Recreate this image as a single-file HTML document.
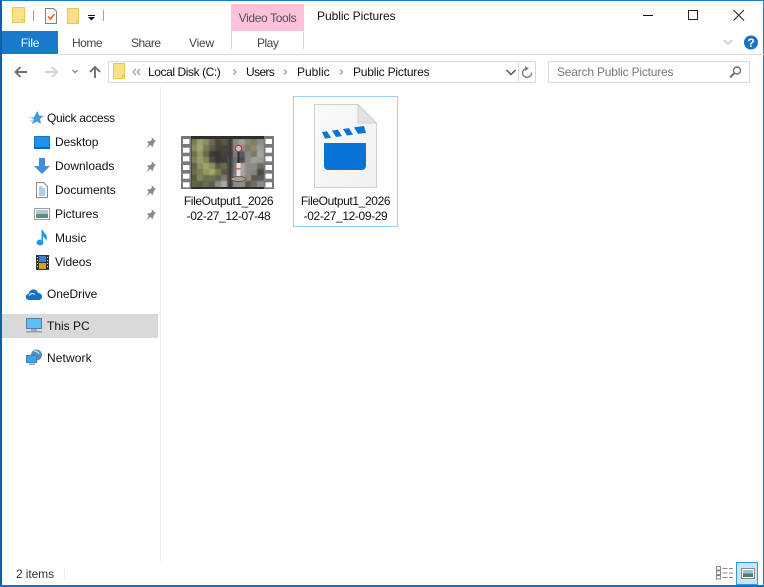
<!DOCTYPE html>
<html><head><meta charset="utf-8"><style>
html,body{margin:0;padding:0;width:764px;height:587px;overflow:hidden;background:#fff}
body{position:relative;font:12px "Liberation Sans",sans-serif;color:#1a1a1a}
.a{position:absolute;white-space:nowrap;line-height:16px}
svg{position:absolute;overflow:visible}
.r{position:absolute}
.n{color:#111}
.t{color:#444}
.f{letter-spacing:-.38px}
</style></head><body>
<div class="r" style="left:0;top:0;width:764px;height:1px;background:#1a7fd0"></div>
<div class="r" style="left:0;top:0;width:2px;height:587px;background:#0f5fa8"></div>
<div class="r" style="right:0;top:0;width:1px;height:587px;background:#1a7fd0"></div>
<div class="r" style="left:0;top:585px;width:764px;height:2px;background:#1273c4"></div>

<!-- QAT -->
<svg style="left:0;top:0" width="130" height="31">
<path d="M12.500 7.500h12v15h-12z" fill="#fbe08c" stroke="#e9c64e"/><path d="M22 22.500v-3h3" fill="none" stroke="#e9c64e"/>
<rect x="33" y="10" width="1" height="11" fill="#a0a0a0"/>
<path d="M45.500 8.500h8l3 3v12h-11z" fill="#fff" stroke="#808080"/><path d="M48 16.500l2.500 2.500 4-5" fill="none" stroke="#e8602c" stroke-width="1.700"/>
<path d="M67.500 8.500h11v15h-11z" fill="#fbe08c" stroke="#e9c64e"/><path d="M77 23.500v-3h2" fill="none" stroke="#e9c64e"/>
<rect x="88" y="15" width="7" height="1" fill="#111"/><path d="M88 17h7l-3.500 3.500z" fill="#111"/>
<rect x="103" y="10" width="1" height="11" fill="#a0a0a0"/>
</svg>

<!-- contextual tab -->
<div class="r" style="left:231px;top:4px;width:73px;height:27px;background:#fdc1dc"></div>
<div class="a" style="left:231px;top:10px;width:73px;text-align:center;color:#5a4a55;letter-spacing:-.36px">Video Tools</div>
<div class="r" style="left:231px;top:31px;width:1px;height:18px;background:#d6d6d6"></div>
<div class="r" style="left:303px;top:31px;width:1px;height:18px;background:#d6d6d6"></div>
<div class="a n" style="left:317px;top:8px;letter-spacing:-.05px">Public Pictures</div>

<!-- window buttons -->
<svg style="left:640px;top:0" width="124" height="31">
<rect x="3" y="15" width="10" height="1" fill="#111"/>
<rect x="48.500" y="10.500" width="9" height="9" fill="none" stroke="#222"/>
<path d="M93.500 10l10.500 10.500M104 10L93.500 20.500" stroke="#222" fill="none"/>
</svg>

<!-- ribbon tabs -->
<div class="r" style="left:2px;top:31px;width:56px;height:23px;background:#1979ca"></div>
<div class="a" style="left:2px;top:35px;width:56px;text-align:center;color:#fff;letter-spacing:-.2px">File</div>
<div class="a t" style="left:72px;top:35px;letter-spacing:-.5px">Home</div>
<div class="a t" style="left:131px;top:35px;letter-spacing:-.5px">Share</div>
<div class="a t" style="left:189px;top:35px;letter-spacing:-.2px">View</div>
<div class="a t" style="left:257px;top:35px;letter-spacing:-.5px">Play</div>
<div class="r" style="left:58px;top:54px;width:706px;height:1px;background:#dadbdc"></div>
<svg style="left:724px;top:35px" width="38" height="18">
<path d="M0 5l4 4 4-4" fill="none" stroke="#b5b5b5" stroke-width="1.100"/>
<circle cx="27" cy="7.500" r="7" fill="#1a72c8"/>
<text x="27" y="12" text-anchor="middle" font-family="Liberation Sans" font-size="12" font-weight="bold" fill="#fff">?</text>
</svg>

<!-- nav -->
<svg style="left:10px;top:62px" width="100" height="20">
<path d="M6 10h11M10.500 5l-5 5 5 5" fill="none" stroke="#707070" stroke-width="1.900"/>
<path d="M35 10h12M42 5l5 5-5 5" fill="none" stroke="#d2d2d2" stroke-width="1.900"/>
<path d="M62.500 8l2.500 2.500L67.500 8" fill="none" stroke="#8a8a8a" stroke-width="1.400"/>
<path d="M85 16V5M80 10l5-5 5 5" fill="none" stroke="#707070" stroke-width="1.900"/>
</svg>

<!-- address -->
<div class="r" style="left:108px;top:61px;width:426px;height:20px;border:1px solid #d9d9d9"></div>
<div class="r" style="left:518px;top:62px;width:1px;height:20px;background:#d9d9d9"></div>
<svg style="left:112px;top:62px" width="20" height="20">
<path d="M1.500 1.500h11v15h-11z" fill="#fbe08c" stroke="#e9c64e"/><path d="M10.500 16.500v-3h2" fill="none" stroke="#e9c64e"/>
</svg>
<svg style="left:130px;top:66px" width="20" height="12">
<path d="M6 3L3 6l3 3M10 3L7 6l3 3" fill="none" stroke="#8a8a8a"/>
</svg>
<div class="a n" style="left:148px;top:64px;letter-spacing:-.42px">Local Disk (C:)</div>
<div class="a n" style="left:246px;top:64px;letter-spacing:-.6px">Users</div>
<div class="a n" style="left:297px;top:64px">Public</div>
<div class="a n" style="left:353px;top:64px;letter-spacing:-.2px">Public Pictures</div>
<svg style="left:230px;top:66px" width="120" height="12">
<path d="M3.500 3.500L6 6 3.500 8.500M54 3.500L56.500 6 54 8.500M110 3.500l2.500 2.500-2.500 2.500" fill="none" stroke="#8a8a8a"/>
</svg>
<svg style="left:505px;top:66px" width="30" height="14">
<path d="M1.500 4l4.500 4.500L10.500 4" fill="none" stroke="#555" stroke-width="1.500"/>
<path d="M26.500 6.500A4.500 4.500 0 1 1 21 2.500" fill="none" stroke="#808080" stroke-width="1.500"/>
<path d="M20 0l4 2.500-4 2.500z" fill="#808080"/>
</svg>

<!-- search -->
<div class="r" style="left:548px;top:61px;width:200px;height:20px;border:1px solid #d9d9d9"></div>
<div class="a" style="left:557px;top:64px;color:#777;letter-spacing:-.2px">Search Public Pictures</div>
<svg style="left:728px;top:65px" width="16" height="14">
<circle cx="9" cy="5.500" r="3.500" fill="none" stroke="#707070" stroke-width="1.400"/><path d="M6.500 8L2 12.500" stroke="#707070" stroke-width="2"/>
</svg>

<!-- sidebar -->
<div class="r" style="left:160px;top:87px;width:1px;height:475px;background:#f0f0f0"></div>
<div class="r" style="left:2px;top:314px;width:156px;height:24px;background:#d9d9d9"></div>

<svg style="left:28px;top:110px" width="16" height="16"><path d="M9.500 1l1.500 4.500 4.500.5-3.500 3 1 5-4-2.500L4 14l1.500-5L1 7h5z" fill="#3f9be0"/><path d="M1 7l5 1M2 11l4-1" stroke="#a6d4f5"/></svg>
<div class="a n" style="left:47px;top:110px;letter-spacing:-.3px">Quick access</div>

<svg style="left:34px;top:136px" width="16" height="15"><rect x=".5" y=".5" width="15" height="11" fill="#1f93e8" stroke="#1876c0"/><rect y="11" width="16" height="2" fill="#1768ad"/></svg>
<div class="a n" style="left:55px;top:134px;letter-spacing:-.1px">Desktop</div>
<svg style="left:34px;top:158px" width="16" height="16"><path d="M5 0h6v8h5l-8 8-8-8h5z" fill="#3f8fdc"/></svg>
<div class="a n" style="left:55px;top:158px">Downloads</div>
<svg style="left:36px;top:182px" width="12" height="16"><path d="M.5.500h7l4 4v11H.5z" fill="#fff" stroke="#8a8a8a"/><path d="M3 5h3M3 7h6M3 9h6M3 11h6M3 13h6" stroke="#5a9bd0"/></svg>
<div class="a n" style="left:55px;top:182px">Documents</div>
<svg style="left:34px;top:208px" width="16" height="12"><rect x=".5" y=".5" width="15" height="11" fill="#fff" stroke="#9a9a9a"/><rect x="2" y="2" width="12" height="4" fill="#a8c8de"/><rect x="2" y="6" width="12" height="4" fill="#5f8a7c"/></svg>
<div class="a n" style="left:55px;top:206px">Pictures</div>
<svg style="left:36px;top:229px" width="12" height="17"><ellipse cx="4" cy="13.500" rx="3.500" ry="3" fill="#1e9be8"/><path d="M5.500 13V1h1.500c.5 3 4 4 4 8 0 1-.5 2-1 3 0-2-1.500-3.500-3-4V13z" fill="#1e9be8"/></svg>
<div class="a n" style="left:55px;top:230px">Music</div>
<svg style="left:36px;top:255px" width="13" height="15"><rect width="13" height="15" fill="#333"/><rect x="3" y="1" width="7" height="6" fill="#3f7fd0"/><rect x="3" y="8" width="7" height="6" fill="#d8a030"/><path d="M1.500 2v1M1.500 5v1M1.500 8v1M1.500 11v1M11.500 2v1M11.500 5v1M11.500 8v1M11.500 11v1" stroke="#ddd"/></svg>
<div class="a n" style="left:55px;top:254px">Videos</div>

<svg style="left:145px;top:136px" width="12" height="90" fill="#8c8c8c">
<path d="M6.500 1l4.500 4.500-1.500.5-1.500 3 .5 1-1 1-2-2-4.500 3.500L4 8 2 6l1-1 1 .5 3-1.500z"/>
<path transform="translate(0,24)" d="M6.500 1l4.500 4.500-1.500.5-1.500 3 .5 1-1 1-2-2-4.500 3.500L4 8 2 6l1-1 1 .5 3-1.500z"/>
<path transform="translate(0,48)" d="M6.500 1l4.500 4.500-1.500.5-1.500 3 .5 1-1 1-2-2-4.500 3.500L4 8 2 6l1-1 1 .5 3-1.500z"/>
<path transform="translate(0,72)" d="M6.500 1l4.500 4.500-1.500.5-1.500 3 .5 1-1 1-2-2-4.500 3.500L4 8 2 6l1-1 1 .5 3-1.500z"/>
</svg>

<svg style="left:26px;top:288px" width="16" height="13"><path d="M3 12a3 3 0 0 1-.5-6C3 3 6 1 8.500 1.500 10.500 2 11.500 3 12 5c2-.2 4 1.500 4 3.500S14.500 12 13 12z" fill="#1272c8"/><path d="M3 7.500C5 5 7 5 9 6.500" stroke="#fff" fill="none"/></svg>
<div class="a n" style="left:47px;top:286px;letter-spacing:-.05px">OneDrive</div>
<svg style="left:26px;top:318px" width="16" height="16"><rect x=".5" y=".5" width="15" height="10" fill="#58c0f5" stroke="#5a7f9e"/><rect x="5" y="11" width="6" height="2" fill="#9ab"/><rect y="13" width="16" height="1.500" fill="#8aa0b5"/></svg>
<div class="a n" style="left:47px;top:318px">This PC</div>
<svg style="left:26px;top:349px" width="16" height="18"><circle cx="10.500" cy="6" r="5.500" fill="#4d8fbf"/><path d="M8 2c2 0 4 1 5 3" stroke="#bcdcf0" fill="none" stroke-width="1.500"/><rect x=".5" y="6.500" width="10" height="7" fill="#3aa5e8" stroke="#4d7fa8"/><rect x="3" y="14.500" width="6" height="1.500" fill="#8aa0b5"/></svg>
<div class="a n" style="left:47px;top:350px;letter-spacing:.1px">Network</div>

<!-- video thumbnail -->
<svg style="left:181px;top:136px" width="93" height="53" viewBox="0 0 93 53">
<defs>
<clipPath id="c"><rect x="10.500" y="3" width="72.500" height="48"/></clipPath>
<filter id="b" x="-5%" y="-5%" width="110%" height="110%"><feGaussianBlur stdDeviation=".9"/></filter>
</defs>
<rect width="93" height="53" fill="#7a7a7a"/>
<rect x="10" width="73" height="53" fill="#2e2e2e"/>
<g fill="#fff">
<rect x="2" y="3" width="6.500" height="5"/><rect x="2" y="11.700" width="6.500" height="5"/><rect x="2" y="20.300" width="6.500" height="5"/><rect x="2" y="29" width="6.500" height="5"/><rect x="2" y="37.700" width="6.500" height="5"/><rect x="2" y="46.300" width="6.500" height="5"/>
<rect x="84.500" y="3" width="6.500" height="5"/><rect x="84.500" y="11.700" width="6.500" height="5"/><rect x="84.500" y="20.300" width="6.500" height="5"/><rect x="84.500" y="29" width="6.500" height="5"/><rect x="84.500" y="37.700" width="6.500" height="5"/><rect x="84.500" y="46.300" width="6.500" height="5"/>
</g>
<g clip-path="url(#c)">
<rect x="10" y="3" width="73" height="48" fill="#767660"/>
<g filter="url(#b)">
<g transform="translate(10,3)">
<rect x="0" y="0" width="7" height="7" fill="#7a7c58"/><rect x="6" y="0" width="7" height="7" fill="#9aa070"/><rect x="12" y="0" width="7" height="7" fill="#8c8e62"/><rect x="18" y="0" width="7" height="7" fill="#6e6c50"/><rect x="24" y="0" width="7" height="7" fill="#4c463a"/><rect x="30" y="0" width="7" height="7" fill="#5c5444"/><rect x="36" y="0" width="7" height="7" fill="#4a443a"/><rect x="42" y="0" width="7" height="7" fill="#8c8c88"/><rect x="48" y="0" width="7" height="7" fill="#a0a09c"/><rect x="54" y="0" width="7" height="7" fill="#8a8a6c"/><rect x="60" y="0" width="7" height="7" fill="#7c7e5e"/><rect x="66" y="0" width="7" height="7" fill="#8e8e80"/>
<rect x="0" y="6" width="7" height="7" fill="#8a8c5e"/><rect x="6" y="6" width="7" height="7" fill="#a2a672"/><rect x="12" y="6" width="7" height="7" fill="#7a7a56"/><rect x="18" y="6" width="7" height="7" fill="#5c5a4a"/><rect x="24" y="6" width="7" height="7" fill="#4a443a"/><rect x="30" y="6" width="7" height="7" fill="#4a443a"/><rect x="36" y="6" width="7" height="7" fill="#46423a"/><rect x="42" y="6" width="7" height="7" fill="#8c8c8a"/><rect x="48" y="6" width="7" height="7" fill="#9a8a8c"/><rect x="54" y="6" width="7" height="7" fill="#7a7c5c"/><rect x="60" y="6" width="7" height="7" fill="#8a8c6a"/><rect x="66" y="6" width="7" height="7" fill="#9a9a94"/>
<rect x="0" y="12" width="7" height="7" fill="#6e7050"/><rect x="6" y="12" width="7" height="7" fill="#929660"/><rect x="12" y="12" width="7" height="7" fill="#6a6a4c"/><rect x="18" y="12" width="7" height="7" fill="#3c3a38"/><rect x="24" y="12" width="7" height="7" fill="#383634"/><rect x="30" y="12" width="7" height="7" fill="#44403a"/><rect x="36" y="12" width="7" height="7" fill="#40403c"/><rect x="42" y="12" width="7" height="7" fill="#7a7a7a"/><rect x="48" y="12" width="7" height="7" fill="#5a5a58"/><rect x="54" y="12" width="7" height="7" fill="#8a8a88"/><rect x="60" y="12" width="7" height="7" fill="#7a7c64"/><rect x="66" y="12" width="7" height="7" fill="#a4a4a0"/>
<rect x="0" y="18" width="7" height="7" fill="#7c8054"/><rect x="6" y="18" width="7" height="7" fill="#9ca068"/><rect x="12" y="18" width="7" height="7" fill="#828458"/><rect x="18" y="18" width="7" height="7" fill="#4a4a48"/><rect x="24" y="18" width="7" height="7" fill="#343436"/><rect x="30" y="18" width="7" height="7" fill="#3c3a3a"/><rect x="36" y="18" width="7" height="7" fill="#4a4842"/><rect x="42" y="18" width="7" height="7" fill="#707070"/><rect x="48" y="18" width="7" height="7" fill="#4e4e4c"/><rect x="54" y="18" width="7" height="7" fill="#8e8e8e"/><rect x="60" y="18" width="7" height="7" fill="#a0a09e"/><rect x="66" y="18" width="7" height="7" fill="#9a9a96"/>
<rect x="0" y="24" width="7" height="7" fill="#5e6048"/><rect x="6" y="24" width="7" height="7" fill="#8c9260"/><rect x="12" y="24" width="7" height="7" fill="#a0a46c"/><rect x="18" y="24" width="7" height="7" fill="#8a8e5c"/><rect x="24" y="24" width="7" height="7" fill="#5c5a48"/><rect x="30" y="24" width="7" height="7" fill="#6a6c4c"/><rect x="36" y="24" width="7" height="7" fill="#4a4640"/><rect x="42" y="24" width="7" height="7" fill="#787878"/><rect x="48" y="24" width="7" height="7" fill="#a8a4a0"/><rect x="54" y="24" width="7" height="7" fill="#8c8c8c"/><rect x="60" y="24" width="7" height="7" fill="#8c8c8c"/><rect x="66" y="24" width="7" height="7" fill="#6c6c66"/>
<rect x="0" y="30" width="7" height="7" fill="#6a6c4e"/><rect x="6" y="30" width="7" height="7" fill="#7c8052"/><rect x="12" y="30" width="7" height="7" fill="#94985c"/><rect x="18" y="30" width="7" height="7" fill="#a2a668"/><rect x="24" y="30" width="7" height="7" fill="#7c7e54"/><rect x="30" y="30" width="7" height="7" fill="#5a5844"/><rect x="36" y="30" width="7" height="7" fill="#4e4a42"/><rect x="42" y="30" width="7" height="7" fill="#7e7e7e"/><rect x="48" y="30" width="7" height="7" fill="#a8a4a0"/><rect x="54" y="30" width="7" height="7" fill="#8a8a8a"/><rect x="60" y="30" width="7" height="7" fill="#84847f"/><rect x="66" y="30" width="7" height="7" fill="#4a4840"/>
<rect x="0" y="36" width="7" height="7" fill="#585a44"/><rect x="6" y="36" width="7" height="7" fill="#80845a"/><rect x="12" y="36" width="7" height="7" fill="#6c7050"/><rect x="18" y="36" width="7" height="7" fill="#6e7050"/><rect x="24" y="36" width="7" height="7" fill="#646450"/><rect x="30" y="36" width="7" height="7" fill="#7a7a74"/><rect x="36" y="36" width="7" height="7" fill="#50483e"/><rect x="42" y="36" width="7" height="7" fill="#8a8a88"/><rect x="48" y="36" width="7" height="7" fill="#a09888"/><rect x="54" y="36" width="7" height="7" fill="#8e8a7a"/><rect x="60" y="36" width="7" height="7" fill="#5c5a52"/><rect x="66" y="36" width="7" height="7" fill="#5a5a56"/>
<rect x="0" y="42" width="7" height="7" fill="#62634a"/><rect x="6" y="42" width="7" height="7" fill="#5c5e46"/><rect x="12" y="42" width="7" height="7" fill="#6a6c50"/><rect x="18" y="42" width="7" height="7" fill="#5a5c48"/><rect x="24" y="42" width="7" height="7" fill="#8a8a84"/><rect x="30" y="42" width="7" height="7" fill="#a8a8a4"/><rect x="36" y="42" width="7" height="7" fill="#4e463c"/><rect x="42" y="42" width="7" height="7" fill="#8c8c8c"/><rect x="48" y="42" width="7" height="7" fill="#8e8e8e"/><rect x="54" y="42" width="7" height="7" fill="#5a5850"/><rect x="60" y="42" width="7" height="7" fill="#6e6e6c"/><rect x="66" y="42" width="7" height="7" fill="#8a8a8a"/>
</g></g>
<rect x="48.500" y="3" width="1.500" height="48" fill="#3e3a34"/>
<rect x="56.500" y="15" width="2" height="13" fill="#2e2e2e"/>
<rect x="55.500" y="27" width="4" height="14" fill="#e8e0d8"/><rect x="55.500" y="32" width="4" height="1.500" fill="#c8704e"/>
<circle cx="57.500" cy="12.500" r="3.200" fill="#c8c4c0" stroke="#b33248" stroke-width="1.200"/>
<ellipse cx="57.500" cy="43" rx="7.500" ry="2.500" fill="#a89f8c" stroke="#4e4a42" stroke-width=".8"/>
</g>
</svg>
<div class="a n f" style="left:168.500px;top:193px;width:120px;text-align:center">FileOutput1_2026</div>
<div class="a n f" style="left:168.500px;top:208px;width:120px;text-align:center">-02-27_12-07-48</div>

<!-- selected file -->
<div class="r" style="left:293px;top:96px;width:103px;height:129px;border:1px solid #99d1ff"></div>
<svg style="left:313px;top:103px" width="66" height="86" viewBox="0 0 66 86">
<defs><linearGradient id="g" x1="0" y1="0" x2="1" y2="1"><stop offset="0" stop-color="#fbfbfb"/><stop offset="1" stop-color="#f0f0f0"/></linearGradient></defs>
<path d="M1.500 1.500H45L63.500 20v64.500h-62z" fill="url(#g)" stroke="#d0d0d0"/>
<path d="M45 1.500V20h18.500z" fill="#e2e2e2" stroke="#d0d0d0"/>
<path d="M11 40h42v23a4 4 0 0 1-4 4H15a4 4 0 0 1-4-4z" fill="#0a74d6"/>
<path d="M9 29l5-.7 4 6.400-6 .9zM19 27.600l6-.9 4 6.400-6 .9zM30 26l6-.9 4 6.500-6 .9zM41 24.400L51 23l2 7-8 .9z" fill="#0a74d6"/>
</svg>
<div class="a n f" style="left:285.500px;top:193px;width:120px;text-align:center">FileOutput1_2026</div>
<div class="a n f" style="left:285.500px;top:208px;width:120px;text-align:center">-02-27_12-09-29</div>

<!-- status bar -->
<div class="a" style="left:16px;top:566px;color:#333;letter-spacing:-.1px">2 items</div>
<div class="r" style="left:64px;top:568px;width:1px;height:12px;background:#f0f0f0"></div>
<svg style="left:716px;top:566px" width="18" height="14">
<g fill="none" stroke="#8a8a8a"><rect x=".5" y=".5" width="4" height="3.500"/><rect x=".5" y="5" width="4" height="3.500"/><rect x=".5" y="9.500" width="4" height="3.500"/></g>
<path d="M6.500 2.500h5M13 2.500h4M6.500 7h5M13 7h4M6.500 11.500h5M13 11.500h4" stroke="#8a8a8a"/>
</svg>
<div class="r" style="left:736px;top:562px;width:20px;height:21px;background:#c6e5f9;border:1px solid #2b9be0"></div>
<svg style="left:741px;top:568px" width="14" height="11"><rect x=".5" y=".5" width="13" height="10" fill="#fff" stroke="#8a8a8a"/><rect x="2" y="2" width="10" height="3.500" fill="#9cc0dc"/><rect x="2" y="5.500" width="10" height="3.500" fill="#4e7f70"/></svg>
</body></html>
